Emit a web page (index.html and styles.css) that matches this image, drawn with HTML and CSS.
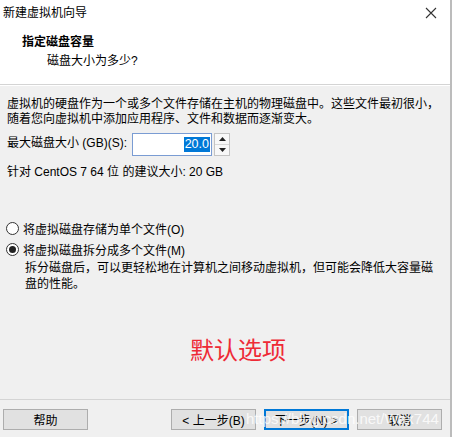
FILE: index.html
```html
<!DOCTYPE html>
<html lang="zh">
<head>
    <meta charset="UTF-8">
    <title>新建虚拟机向导</title>
    <link rel="stylesheet" href="styles.css">
</head>
<body>
    <div class="wizard">
        <div class="top">
            <div class="titlebar">
                <span class="title">新建虚拟机向导</span>
                <svg class="close" width="12" height="12" viewBox="0 0 12 12">
                    <path d="M1 1 L11 11 M11 1 L1 11" stroke="#333" stroke-width="1.1" fill="none"/>
                </svg>
            </div>
            <div class="header">
                <div class="heading">指定磁盘容量</div>
                <div class="subheading">磁盘大小为多少?</div>
            </div>
        </div>

        <div class="content">
            <p class="intro">虚拟机的硬盘作为一个或多个文件存储在主机的物理磁盘中。这些文件最初很小，<br>随着您向虚拟机中添加应用程序、文件和数据而逐渐变大。</p>

            <div class="size-row">
                <label class="size-label">最大磁盘大小 (GB)(S):</label>
                <div class="spin-input"><span class="selected">20.0</span></div>
                <div class="spin-buttons">
                    <div class="spin-btn"><svg width="7" height="4" viewBox="0 0 7 4"><path d="M0 4 L3.5 0 L7 4 Z" fill="#222"/></svg></div>
                    <div class="spin-btn"><svg width="7" height="4" viewBox="0 0 7 4"><path d="M0 0 L3.5 4 L7 0 Z" fill="#222"/></svg></div>
                </div>
            </div>

            <div class="hint">针对 CentOS 7 64 位 的建议大小: 20 GB</div>

            <div class="options">
                <div class="radio-row">
                    <span class="radio"></span>
                    <span>将虚拟磁盘存储为单个文件(O)</span>
                </div>
                <div class="radio-row">
                    <span class="radio checked"></span>
                    <span>将虚拟磁盘拆分成多个文件(M)</span>
                </div>
                <p class="option-desc">拆分磁盘后，可以更轻松地在计算机之间移动虚拟机，但可能会降低大容量磁<br>盘的性能。</p>
            </div>

            <div class="note">默认选项</div>
        </div>

        <div class="footer">
            <button class="btn">帮助</button>
            <div class="nav-buttons">
                <button class="btn">&lt; 上一步(B)</button>
                <button class="btn btn-default">下一步(N) &gt;</button>
                <button class="btn">取消</button>
            </div>
            <span class="watermark">https://blog.csdn.net/Wax744</span>
        </div>
    </div>
</body>
</html>
```

FILE: styles.css
```css
body {
    margin: 0;
    font-family: "Liberation Sans", "Noto Sans CJK SC", sans-serif;
    font-size: 12px;
    color: #000;
    background-color: #f0f0f0;
}
.wizard {
    width: 450px;
    height: 437px;
    border-right: 2px solid #bcbcbc;
    display: flex;
    flex-direction: column;
    background-color: #f0f0f0;
}
.top {
    background-color: #fff;
    border-bottom: 1px solid #d4d4d4;
    height: 84px;
}
.titlebar {
    height: 26px;
    display: flex;
    align-items: center;
    justify-content: space-between;
    padding: 0 13px 0 3px;
}
.title {
    line-height: 16px;
}
.header {
    padding-top: 8px;
}
.heading {
    font-weight: bold;
    line-height: 16px;
    padding-left: 22px;
}
.subheading {
    line-height: 16px;
    margin-top: 3px;
    padding-left: 47px;
}
.content {
    flex: 1;
    border-top: 1px solid #fff;
    padding: 0 7px;
}
.intro {
    margin: 11px 0 0;
    line-height: 15px;
}
.size-row {
    display: flex;
    align-items: center;
    margin-top: 6px;
}
.size-label {
    width: 125px;
    line-height: 16px;
    margin-top: -3px;
}
.spin-input {
    width: 77px;
    height: 21px;
    border: 1px solid #7a9cd3;
    background-color: #fff;
    display: flex;
    align-items: center;
    justify-content: flex-end;
    padding-right: 1px;
}
.selected {
    background-color: #0078d7;
    color: #fff;
    line-height: 15px;
    font-size: 12.5px;
    padding: 0 1px;
}
.spin-buttons {
    display: flex;
    flex-direction: column;
    margin-left: 2px;
    border: 1px solid #c4c4c4;
    height: 21px;
}
.spin-btn {
    width: 14px;
    height: 10px;
    display: flex;
    align-items: center;
    justify-content: center;
    background-color: #f8f8f8;
}
.spin-btn + .spin-btn {
    border-top: 1px solid #d8d8d8;
}
.hint {
    margin-top: 8px;
    line-height: 16px;
}
.options {
    margin-top: 40px;
}
.radio-row {
    display: flex;
    align-items: center;
    gap: 4px;
    height: 16px;
    margin-bottom: 5px;
    margin-left: -1px;
}
.radio {
    width: 11px;
    height: 11px;
    border: 1px solid #333;
    border-radius: 50%;
    background-color: #fff;
    display: flex;
    align-items: center;
    justify-content: center;
}
.radio.checked::after {
    content: "";
    width: 7px;
    height: 7px;
    border-radius: 50%;
    background-color: #222;
}
.option-desc {
    margin: -2px 0 0 18px;
    line-height: 16px;
}
.note {
    margin-top: 44px;
    padding-left: 183px;
    font-size: 24px;
    line-height: 30px;
    color: #ee2a36;
}
.footer {
    position: relative;
    height: 38px;
    border-top: 1px solid #d4d4d4;
    display: flex;
    justify-content: space-between;
    align-items: flex-start;
    padding: 9px 8px 0 3px;
    box-sizing: border-box;
}
.nav-buttons {
    display: flex;
    gap: 8px;
}
.btn {
    width: 85px;
    height: 21px;
    padding: 0;
    border: 1px solid #adadad;
    background-color: #e1e1e1;
    font-family: "Liberation Sans", "Noto Sans CJK SC", sans-serif;
    font-size: 12px;
    color: #000;
}
.btn-default {
    border: 2px solid #0078d7;
}
.watermark {
    position: absolute;
    left: 246px;
    top: 9px;
    font-size: 15px;
    line-height: 20px;
    color: rgba(255, 255, 255, 0.8);
    pointer-events: none;
}
```
